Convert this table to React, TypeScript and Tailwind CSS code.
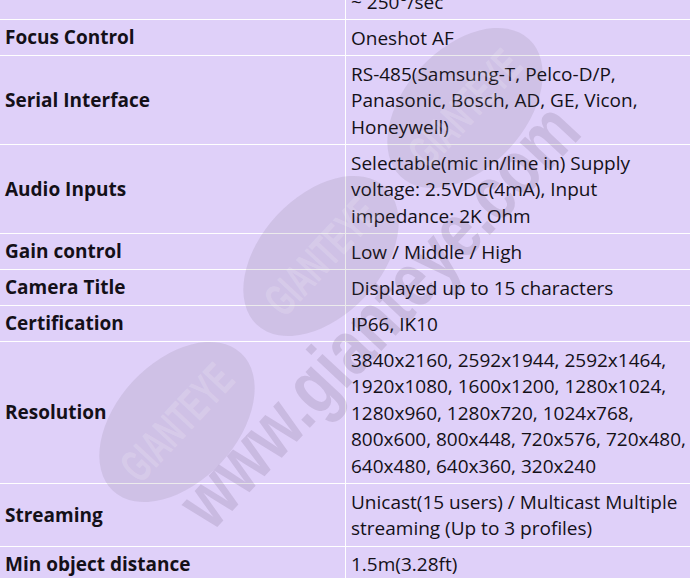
import React from 'react';

interface SpecRow {
  label: string;
  lines: string[];
}

const rows: SpecRow[] = [
  { label: 'Tilt Speed', lines: ['Preset: 0.1°/sec', '~ 250°/sec'] },
  { label: 'Focus Control', lines: ['Oneshot AF'] },
  {
    label: 'Serial Interface',
    lines: ['RS-485(Samsung-T, Pelco-D/P,', 'Panasonic, Bosch, AD, GE, Vicon,', 'Honeywell)'],
  },
  {
    label: 'Audio Inputs',
    lines: ['Selectable(mic in/line in) Supply', 'voltage: 2.5VDC(4mA), Input', 'impedance: 2K Ohm'],
  },
  { label: 'Gain control', lines: ['Low / Middle / High'] },
  { label: 'Camera Title', lines: ['Displayed up to 15 characters'] },
  { label: 'Certification', lines: ['IP66, IK10'] },
  {
    label: 'Resolution',
    lines: [
      '3840x2160, 2592x1944, 2592x1464,',
      '1920x1080, 1600x1200, 1280x1024,',
      '1280x960, 1280x720, 1024x768,',
      '800x600, 800x448, 720x576, 720x480,',
      '640x480, 640x360, 320x240',
    ],
  },
  { label: 'Streaming', lines: ['Unicast(15 users) / Multicast Multiple', 'streaming (Up to 3 profiles)'] },
  { label: 'Min object distance', lines: ['1.5m(3.28ft)'] },
];

// Logo ovale du filigrane
function Badge({ className }: { className: string }) {
  return (
    <div
      className={`absolute flex h-[120px] w-[188px] -translate-x-1/2 -translate-y-1/2 -rotate-[47deg] items-center justify-center rounded-[50%] bg-[rgba(80,70,80,0.11)] ${className}`}
    >
      <span className="inline-block scale-x-[0.6] font-['Liberation_Sans',sans-serif] text-[46px] leading-none font-bold text-[rgba(255,255,255,0.18)]">
        GIANTEYE
      </span>
    </div>
  );
}

export default function App() {
  return (
    <div className="relative h-[578px] w-[690px] overflow-hidden bg-[#dfd0f9] font-['Open_Sans',sans-serif] text-[19px] leading-[26.5px] text-[#141018]">
      {/* Tableau */}
      <div className="-mt-[42.5px]">
        {rows.map((row) => (
          <div key={row.label} className="flex border-b border-white">
            <div className="flex w-[346px] shrink-0 items-center border-r border-white pl-[5px] font-bold">
              {row.label}
            </div>
            <div className="flex-1 pt-[4.5px] pb-[4px] pl-[5px]">
              {row.lines.map((line) => (
                <div key={line} className="whitespace-nowrap">
                  {line}
                </div>
              ))}
            </div>
          </div>
        ))}
      </div>

      {/* Filigrane */}
      <div className="pointer-events-none absolute inset-0">
        <Badge className="left-[177px] top-[422px]" />
        <Badge className="left-[321px] top-[256px]" />
        <Badge className="left-[465px] top-[108px]" />
        <div className="absolute left-[214px] top-[475px] h-[60px] origin-bottom-left -rotate-[47deg] whitespace-nowrap font-['Liberation_Sans',sans-serif] text-[78px] leading-[60px] font-bold text-[rgba(80,60,90,0.15)]">
          <span className="inline-block origin-left scale-x-[0.78]">www.gianteye.com</span>
        </div>
      </div>
    </div>
  );
}
